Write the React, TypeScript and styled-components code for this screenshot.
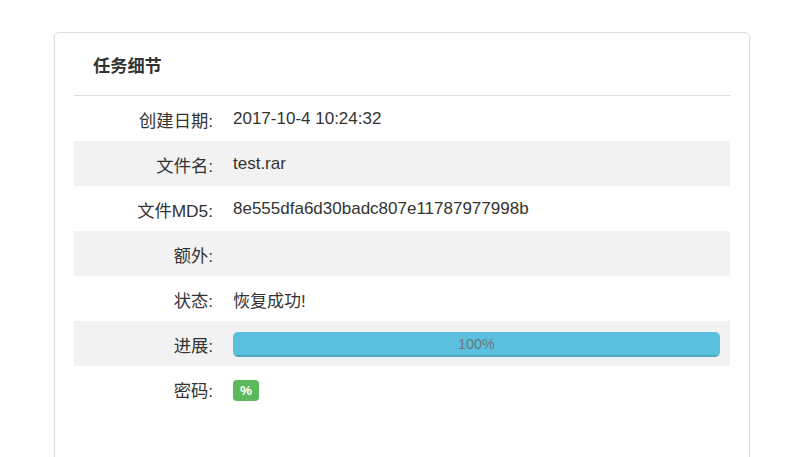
import React from "react";
import styled, { createGlobalStyle } from "styled-components";

const GlobalStyle = createGlobalStyle`
  html, body {
    margin: 0;
    padding: 0;
    background: #ffffff;
  }
  body {
    font-family: "Liberation Sans", "Noto Sans CJK SC", Arial, sans-serif;
    font-size: 17px;
    color: #333333;
  }
`;

const Page = styled.div`
  padding: 32px 50px 0 54px;
  height: 457px;
  box-sizing: border-box;
  overflow: hidden;
`;

const Panel = styled.div`
  width: 696px;
  box-sizing: border-box;
  border: 1px solid #dcdcdc;
  border-radius: 5px;
  padding: 0 19px 80px 19px;
  background: #fff;
`;

const Header = styled.div`
  height: 62px;
  display: flex;
  align-items: center;
  padding-left: 19px;
  border-bottom: 1px solid #dddddd;
`;

const Title = styled.h3`
  margin: 0;
  font-size: 17.2px;
  font-weight: bold;
  color: #333;
`;

const Row = styled.div<{ $striped?: boolean }>`
  display: grid;
  grid-template-columns: 149px 1fr;
  height: 45px;
  align-items: center;
  background: ${(p) => (p.$striped ? "#f2f2f2" : "#ffffff")};
`;

const Label = styled.div`
  text-align: right;
  padding-right: 10px;
  padding-top: 1px;
  font-size: 17.3px;
  white-space: nowrap;
`;

const Value = styled.div`
  padding: 1px 10px 0 10px;
  white-space: nowrap;
  display: flex;
  align-items: center;
`;

const Progress = styled.div`
  flex: 1;
  height: 25px;
  margin-top: 1px;
  border-radius: 5px;
  overflow: hidden;
  background: #f5f5f5;
`;

const ProgressBar = styled.div`
  height: 100%;
  background: #5bc0de;
  box-shadow: inset 0 -2px 0 rgba(0, 0, 0, 0.12);
  color: #6b747a;
  font-size: 14.4px;
  line-height: 25px;
  text-align: center;
`;

const Badge = styled.span<{ $color: string }>`
  display: inline-block;
  background: ${(p) => p.$color};
  color: #fff;
  font-weight: bold;
  font-size: 13.5px;
  line-height: 21px;
  height: 21px;
  padding: 0 7px;
  border-radius: 4px;
  margin-top: 3px;
`;

type Item = { label: string; value: React.ReactNode };

export default function App() {
  const items: Item[] = [
    { label: "创建日期:", value: "2017-10-4 10:24:32" },
    { label: "文件名:", value: "test.rar" },
    { label: "文件MD5:", value: "8e555dfa6d30badc807e11787977998b" },
    { label: "额外:", value: "" },
    { label: "状态:", value: "恢复成功!" },
    {
      label: "进展:",
      value: (
        <Progress>
          <ProgressBar style={{ width: "100%" }}>100%</ProgressBar>
        </Progress>
      ),
    },
    { label: "密码:", value: <Badge $color="#5cb85c">%</Badge> },
  ];
  return (
    <>
      <GlobalStyle />
      <Page>
        <Panel>
          <Header>
            <Title>任务细节</Title>
          </Header>
          {items.map((it, i) => (
            <Row key={it.label} $striped={i % 2 === 1}>
              <Label>{it.label}</Label>
              <Value>{it.value}</Value>
            </Row>
          ))}
        </Panel>
      </Page>
    </>
  );
}
